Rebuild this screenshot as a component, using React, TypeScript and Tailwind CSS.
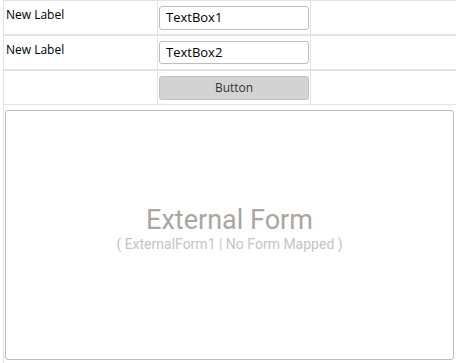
import React from "react";

function Row({ children }: { children?: React.ReactNode }) {
  return (
    <div className="flex h-[35px] border-t border-b border-[#e3e3e3]">
      {children}
    </div>
  );
}

export default function App() {
  const label = "font-['Open_Sans',sans-serif] text-[12px] text-black";
  return (
    <div className="w-[456px] h-[363px] bg-white overflow-hidden">
      <div className="ml-[3px] h-[363px] border-l border-[#e3e3e3] flex flex-col">
        <Row>
          <div className={`w-[154px] border-r border-[#e3e3e3] pl-[2px] pt-[5px] ${label}`}>New Label</div>
          <div className="w-[153px] border-r border-[#e3e3e3] pl-[1px] pt-[5px]">
            <div className="w-[150px] h-[24px] border border-[#bdbdbd] rounded-[3px] px-[6px] flex items-center text-[13px] font-['Open_Sans',sans-serif] text-black">TextBox1</div>
          </div>
          <div className="flex-1" />
        </Row>
        <Row>
          <div className={`w-[154px] border-r border-[#e3e3e3] pl-[2px] pt-[5px] ${label}`}>New Label</div>
          <div className="w-[153px] border-r border-[#e3e3e3] pl-[1px] pt-[5px]">
            <div className="w-[150px] h-[23px] border border-[#bdbdbd] rounded-[3px] px-[6px] flex items-center text-[13px] font-['Open_Sans',sans-serif] text-black">TextBox2</div>
          </div>
          <div className="flex-1" />
        </Row>
        <Row>
          <div className="w-[154px] border-r border-[#e3e3e3]" />
          <div className="w-[153px] border-r border-[#e3e3e3] pl-[1px] pt-[5px]">
            <div className="w-[150px] h-[24px] border border-[#c2c2c2] bg-[#d3d3d3] rounded-[3px] flex items-center justify-center text-[12px] font-['Open_Sans',sans-serif] text-[#333]">Button</div>
          </div>
          <div className="flex-1" />
        </Row>
        <div className="ml-[1px] mt-[5px] w-[449px] h-[250px] border border-[#bcbcbc] rounded-[3px] flex flex-col items-center justify-center">
          <div className="font-['Roboto',sans-serif] text-[27px] leading-[30px] text-[#aca5a1] mb-[1px]">External Form</div>
          <div className="font-['Roboto',sans-serif] text-[14px] leading-[16px] text-[#c4c4c4] mb-[14px]">( ExternalForm1 | No Form Mapped )</div>
        </div>
      </div>
    </div>
  );
}
